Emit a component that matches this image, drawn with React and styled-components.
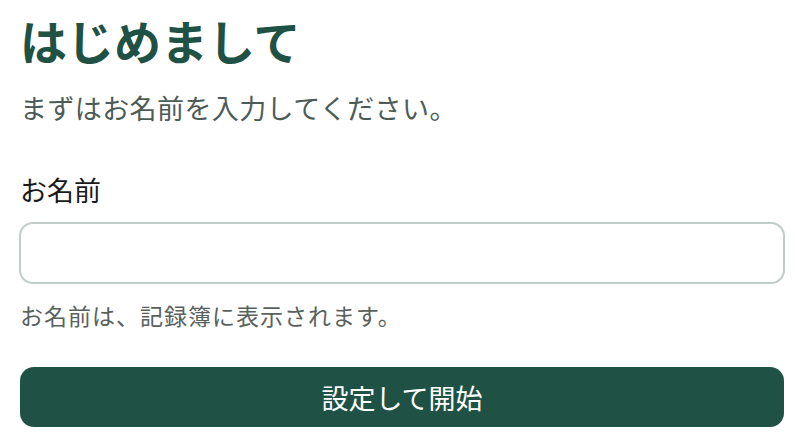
import React, { useState } from 'react';
import styled, { createGlobalStyle } from 'styled-components';

const GlobalStyle = createGlobalStyle`
  html, body {
    margin: 0;
    padding: 0;
    background: #ffffff;
  }
  body {
    font-family: "Noto Sans CJK JP", "Noto Sans", sans-serif;
  }
`;

const Page = styled.div`
  display: flex;
  flex-direction: column;
  padding: 12px 20px 0;
`;

const Title = styled.h1`
  margin: 0;
  font-size: 47px;
  line-height: 56px;
  font-weight: 700;
  color: #1f5244;
`;

const Lead = styled.p`
  margin: 22px 0 0;
  font-size: 27px;
  line-height: 36px;
  letter-spacing: 0.4px;
  color: #4d5b57;
`;

const Field = styled.div`
  display: flex;
  flex-direction: column;
  margin-top: 46px;
`;

const Label = styled.label`
  font-size: 27px;
  line-height: 36px;
  color: #1a1a1a;
`;

const Input = styled.input`
  box-sizing: border-box;
  margin: 14px -1px 0;
  height: 62px;
  padding: 0 18px;
  border: 2px solid #c2ccc8;
  border-radius: 14px;
  font-family: inherit;
  font-size: 27px;
  color: #1a1a1a;
  background: #fff;
  outline: none;
`;

const Hint = styled.p`
  margin: 15px 0 0;
  font-size: 23px;
  line-height: 32px;
  letter-spacing: 1px;
  color: #59615e;
`;

const SubmitButton = styled.button`
  margin-top: 36px;
  height: 60px;
  border: none;
  border-radius: 14px;
  background: #1f5244;
  color: #ffffff;
  font-family: inherit;
  font-size: 27px;
  cursor: pointer;
`;

export default function App() {
  const [name, setName] = useState('');

  return (
    <>
      <GlobalStyle />
      <Page>
        <Title>はじめまして</Title>
        <Lead>まずはお名前を入力してください。</Lead>
        <Field>
          <Label htmlFor="name">お名前</Label>
          <Input id="name" value={name} onChange={e => setName(e.target.value)} />
        </Field>
        <Hint>お名前は、記録簿に表示されます。</Hint>
        <SubmitButton type="button">設定して開始</SubmitButton>
      </Page>
    </>
  );
}
